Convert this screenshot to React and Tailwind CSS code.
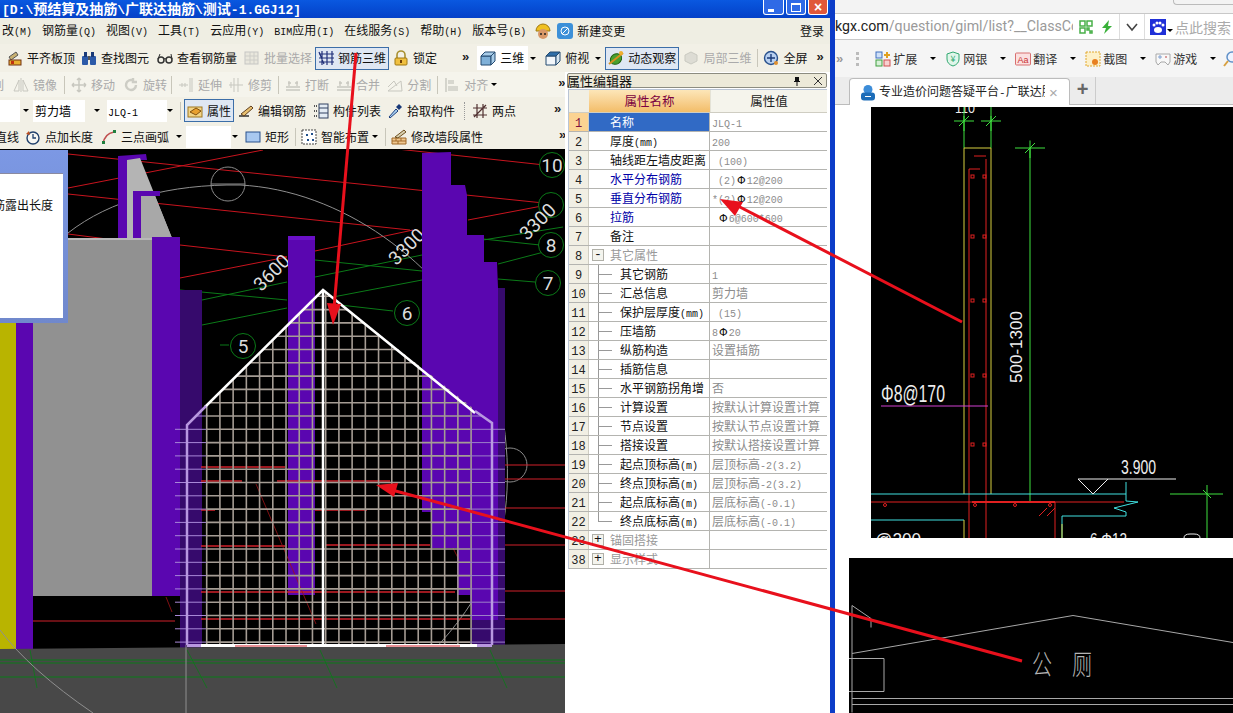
import { Fragment } from "react"
import clsx from "clsx"

const cjk = "font-['Noto_Sans_CJK_SC','Liberation_Sans',sans-serif]"

// SimSun style: latin runs are half the width of the cjk glyphs
const T = ({ s, latin = "text-[10px]" }) => (
  <>
    {s.split(/([\x00-\x7f]+)/).map((part, i) =>
      /^[\x00-\x7f]+$/.test(part)
        ? <span key={i} className={clsx("font-['Liberation_Mono',monospace]", latin)}>{part}</span>
        : <Fragment key={i}>{part}</Fragment>
    )}
  </>
)

const Ico = ({ name, className }) => {
  const shapes = {
    align: <><path d="M2 7 9 2l2 3-7 5z" fill="#c8b070" stroke="#555" /><rect x="2" y="10" width="12" height="5" fill="#e8b030" stroke="#703010" /><rect x="4" y="11" width="3" height="3" fill="#c03010" /></>,
    binoculars: <><rect x="1" y="6" width="6" height="9" rx="1" fill="#2c5aa8" /><rect x="9" y="6" width="6" height="9" rx="1" fill="#2c5aa8" /><rect x="3" y="2" width="3" height="5" fill="#1a3a78" /><rect x="10" y="2" width="3" height="5" fill="#1a3a78" /><rect x="7" y="6" width="2" height="4" fill="#555" /></>,
    glasses: <><circle cx="4" cy="10" r="3" fill="none" stroke="#333" strokeWidth="1.5" /><circle cx="12" cy="10" r="3" fill="none" stroke="#333" strokeWidth="1.5" /><path d="M7 9q1-1 2 0M1 9l2-5M15 9l-1-5" fill="none" stroke="#333" /></>,
    batch: <><rect x="1" y="2" width="13" height="12" fill="#e8e6dc" stroke="#bbb" /><path d="M1 6h13M1 10h13M6 2v12M10 2v12" stroke="#c4c4c0" /></>,
    rebar: <path d="M1 4h15M1 8h15M1 12h15M4 1v14M9 1v14M14 1v14M1 2l5 12" fill="none" stroke="#20307a" strokeWidth="1.2" />,
    lock: <><path d="M4 8V5a4 4 0 0 1 8 0v3" fill="none" stroke="#a89030" strokeWidth="1.6" /><rect x="2" y="8" width="12" height="7" rx="1" fill="#f0c040" stroke="#a07810" /><rect x="7" y="10" width="2" height="3" fill="#704008" /></>,
    cube: <><path d="M1 6h10v9H1z" fill="#7fb0d8" stroke="#244a70" /><path d="M1 6l4-4h10l-4 4zM11 6l4-4v9l-4 4z" fill="#a8cce8" stroke="#244a70" /></>,
    cubeTop: <><path d="M1 6h10v9H1z" fill="#f2f6fa" stroke="#244a70" /><path d="M1 6l4-4h10l-4 4z" fill="#2f6ea8" stroke="#244a70" /><path d="M11 6l4-4v9l-4 4z" fill="#d8e6f0" stroke="#244a70" /></>,
    orbit: <><ellipse cx="8" cy="9" rx="6" ry="5" transform="rotate(-35 8 9)" fill="#48a030" stroke="#206010" /><path d="M1 14 15 3" stroke="#d89020" strokeWidth="2" /><circle cx="13" cy="3" r="2" fill="#f0b030" /></>,
    local: <path d="M8 2l6 3v6l-6 3-6-3V5z" fill="#d8d8d0" stroke="#c0c0b8" />,
    zoom: <><circle cx="8" cy="8" r="6.5" fill="#b8d0f0" stroke="#28508c" strokeWidth="1.4" /><path d="M8 4v8M4 8h8" stroke="#183a78" strokeWidth="1.4" /><circle cx="13" cy="13" r="2" fill="#e09030" /></>,
    mirror: <><path d="M1 14 6 3v11zM15 14 10 3v11z" fill="none" stroke="#bdbdb5" /><path d="M8 1v14" stroke="#bdbdb5" /></>,
    move: <path d="M8 1v14M1 8h14M8 1 6 3M8 1l2 2M8 15l-2-2M8 15l2-2M1 8l2-2M1 8l2 2M15 8l-2-2M15 8l-2 2" fill="none" stroke="#bdbdb5" strokeWidth="1.4" />,
    rotate: <path d="M13 8a5 5 0 1 1-3-4.6M10 1v4h4" fill="none" stroke="#c4c4bc" strokeWidth="2.4" />,
    extend: <path d="M1 8h9M4 6v4M7 6v4M12 1v14M14 1v14" fill="none" stroke="#bdbdb5" />,
    trim: <path d="M1 8h14M6 1v14M10 1v14M3 5v6" fill="none" stroke="#bdbdb5" />,
    brk: <path d="M1 10h14M1 13h14M4 4v5M12 4v5M3 6h3M10 6h3" fill="none" stroke="#bdbdb5" strokeWidth="1.3" />,
    split: <path d="M1 14h14L14 4zM1 10l6-6 3 5" fill="none" stroke="#bdbdb5" />,
    alignL: <><path d="M2 1v14" stroke="#bdbdb5" strokeWidth="1.4" /><rect x="4" y="3" width="6" height="4" fill="#d0d0c8" /><rect x="4" y="9" width="10" height="5" fill="#d0d0c8" /></>,
    props: <><rect x="1" y="4" width="14" height="10" fill="#f2d488" stroke="#a07820" /><path d="M3 9l6-4 5 3-5 4z" fill="#e8a030" stroke="#805010" /></>,
    pencil: <><path d="M1 13h10" stroke="#222" strokeWidth="1.4" /><path d="M3 11 13 3l2 2-9 8z" fill="#e8c070" stroke="#604020" /></>,
    list: <><path d="M1 3h3M1 8h3M1 13h3" stroke="#555" strokeWidth="2" strokeDasharray="1 1" /><rect x="6" y="1" width="9" height="14" fill="#e4ecf4" stroke="#304060" /><path d="M6 5h9M6 10h9" stroke="#304060" /></>,
    dropper: <><path d="M2 14l7-8 2 2-8 7z" fill="#a8d0f0" stroke="#204080" /><path d="M9 4l3-3 3 3-3 3z" fill="#183878" /></>,
    cross: <path d="M1 5h14M1 12h14M5 1v14M11 1v14M2 14 14 2" fill="none" stroke="#503030" strokeWidth="1.2" />,
    clock: <><circle cx="8" cy="9" r="6" fill="#f6f6f2" stroke="#20406c" strokeWidth="1.4" /><path d="M8 5v4h3" fill="none" stroke="#20406c" strokeWidth="1.3" /><path d="M1 5 4 2l1 4" fill="#c05020" /></>,
    arc: <><path d="M2 15C3 8 7 4 13 3" fill="none" stroke="#c05050" strokeWidth="1.6" /><rect x="1" y="12" width="3" height="3" fill="#208040" /><rect x="12" y="1" width="3" height="3" fill="#208040" /></>,
    rect: <rect x="1" y="3" width="14" height="10" fill="#a8c8f0" stroke="#28508c" />,
    smart: <><rect x="1" y="1" width="14" height="14" fill="#fff" stroke="#444" strokeDasharray="2 1" /><path d="M5 5h2v2H5zM10 4h2v2h-2zM6 10h2v2H6zM11 10h2v2h-2z" fill="#20508c" /></>,
    wall: <><path d="M1 15V9h14v6zM1 12h14M5 9v3M10 9v3M7 12v3" fill="#f0c890" stroke="#a06828" /><path d="M4 8 13 1l2 2-8 6z" fill="#d8d0b0" stroke="#705020" /></>,
  }
  return <svg viewBox="0 0 16 16" className={clsx("w-4 h-4 shrink-0", className)}>{shapes[name]}</svg>
}

const Caret = ({ className }) => (
  <div className={clsx("w-0 h-0 shrink-0 border-x-[3px] border-x-transparent border-t-[3px] border-t-black", className)} />
)
const More = ({ className }) => (
  <span className={clsx("shrink-0 font-['Liberation_Sans'] font-bold text-[13px] leading-none text-[#222]", className)}>»</span>
)
const Sep = ({ className }) => <div className={clsx("w-px h-[18px] bg-[#c8c6ba] shrink-0", className)} />

const Tool = ({ icon, label, gray, active, className }) => (
  <div className={clsx(
    "flex items-center shrink-0 gap-1",
    active && "h-[23px] px-[2px] border border-[#3c6ea8] bg-[#dfe7f3]",
    gray ? "text-[#aaa] " : "text-[#111]",
    className
  )}>
    <Ico name={icon} className={gray ? "opacity-80" : ""} />
    <span className="text-xs leading-none whitespace-nowrap">{label}</span>
  </div>
)

const Row = ({ className, children }) => (
  <div className={clsx("flex items-center shrink-0 bg-[#f2f0e6] overflow-hidden", className)}>{children}</div>
)

const rows = [
  { n: "1", name: "名称", val: "JLQ-1", sel: true },
  { n: "2", name: "厚度(mm)", val: "200" },
  { n: "3", name: "轴线距左墙皮距离", val: " (100)" },
  { n: "4", name: "水平分布钢筋", val: " (2)", bar: "12@200", link: true },
  { n: "5", name: "垂直分布钢筋", val: "*(2)", bar: "12@200", link: true },
  { n: "6", name: "拉筋", val: " ", bar: "6@600*600", link: true },
  { n: "7", name: "备注", val: "" },
  { n: "8", name: "其它属性", val: "", group: "-" },
  { n: "9", name: "其它钢筋", val: "1", sub: true },
  { n: "10", name: "汇总信息", val: "剪力墙", sub: true },
  { n: "11", name: "保护层厚度(mm)", val: " (15)", sub: true },
  { n: "12", name: "压墙筋", val: "8", bar: "20", sub: true },
  { n: "13", name: "纵筋构造", val: "设置插筋", sub: true },
  { n: "14", name: "插筋信息", val: "", sub: true },
  { n: "15", name: "水平钢筋拐角增", val: "否", sub: true },
  { n: "16", name: "计算设置", val: "按默认计算设置计算", sub: true },
  { n: "17", name: "节点设置", val: "按默认节点设置计算", sub: true },
  { n: "18", name: "搭接设置", val: "按默认搭接设置计算", sub: true },
  { n: "19", name: "起点顶标高(m)", val: "层顶标高-2(3.2)", sub: true },
  { n: "20", name: "终点顶标高(m)", val: "层顶标高-2(3.2)", sub: true },
  { n: "21", name: "起点底标高(m)", val: "层底标高(-0.1)", sub: true },
  { n: "22", name: "终点底标高(m)", val: "层底标高(-0.1)", sub: true, last: true },
  { n: "23", name: "锚固搭接", val: "", group: "+" },
  { n: "38", name: "显示样式", val: "", group: "+" },
]

const PropRow = ({ r }) => (
  <div className="flex h-[19px] shrink-0 border-b border-[#b4b4b0] text-xs leading-[18px]">
    <div className={clsx("w-[20px] shrink-0 text-center border-r border-[#cfcdc2]", r.sel ? "bg-[#fbd392] text-[#7a1040]" : "bg-[#f1efe4] text-[#222]")}>
      <T s={r.n} latin="text-[12px]" />
    </div>
    <div className={clsx("relative w-[121px] shrink-0 border-r border-[#b4b4b0] whitespace-nowrap overflow-hidden", r.sel ? "bg-[#316ac5] text-white" : r.link ? "text-[#0000a8]" : r.group ? "text-[#999]" : "text-[#111]")}>
      {r.group && (
        <div className="absolute left-[3px] top-[3px] w-[12px] h-[12px] border border-[#b0b0a8] bg-[#f4f4ee] text-[#111] text-center text-[13px] leading-[9px] font-['Liberation_Mono']">{r.group}</div>
      )}
      {r.sub && <div className={clsx("absolute left-[9px] top-0 w-px border-l border-[#999]", r.last ? "h-[10px]" : "h-[19px]")} />}
      {r.sub && <div className="absolute left-[10px] top-[9px] w-[13px] border-t border-[#999]" />}
      <div className={r.sub ? "pl-[31px]" : "pl-[21px]"}><T s={r.name} /></div>
    </div>
    <div className="flex-1 pl-[2px] text-[#8c8c8c] whitespace-pre overflow-hidden">
      <T s={r.val} />
      {r.bar && <span className="text-[#111] font-['DejaVu_Sans'] text-[11px] mx-[1px]">Φ</span>}
      {r.bar && <T s={r.bar} />}
    </div>
  </div>
)

const PropPanel = () => (
  <div className="w-[265px] shrink-0 bg-white pl-[2px] pr-[3px] flex flex-col">
    <div className="h-[15px] mt-[1px] flex items-center bg-[#ece9d8] border border-[#8c8c80] rounded-[2px] text-[13px] leading-none text-[#111]">
      <span className="-ml-px">属性编辑器</span>
      <svg viewBox="0 0 10 10" className="w-[10px] h-[10px] ml-auto mr-[11px]"><path d="M3 1h4v4h1v1H5.5v4h-1V6H2V5h1z" fill="#111" /></svg>
      <svg viewBox="0 0 10 10" className="w-[10px] h-[10px] mr-[3px]"><path d="M1 1l8 8M9 1l-8 8" stroke="#333" /></svg>
    </div>
    <div className="mt-[1px] ml-[1px] border-t border-l border-[#b9c4d4] flex flex-col">
      <div className="flex h-[23px] shrink-0 text-[12.5px] leading-[22px] text-center border-b border-[#cfcdc2]">
        <div className="w-[20px] shrink-0 bg-[#f1efe4]" />
        <div className="w-[121px] shrink-0 bg-gradient-to-b from-[#fce6b8] to-[#f3bd68] text-[#7a0040]">属性名称</div>
        <div className="flex-1 bg-[#f5f4ec] text-[#222] border-l border-[#e4e2d6]">属性值</div>
      </div>
      {rows.map(r => <PropRow key={r.n} r={r} />)}
    </div>
  </div>
)

const mx = Array.from({ length: 21 }, (_, i) => 206.7 + i * 13.22)
const my = Array.from({ length: 27 }, (_, i) => 296.3 + i * 13.3)
const reds = [[68, 154, 563, 205], [68, 188, 263, 150], [68, 194, 410, 230], [68, 234, 115, 240], [180, 245, 287, 257], [180, 278, 287, 257], [315, 251, 413, 230], [468, 220, 563, 202], [397, 149, 563, 167], [15, 150, 37, 151]]
const greens = [[180, 290, 287, 300], [202, 300, 287, 282], [202, 325, 287, 308], [315, 260, 422, 271], [315, 277, 422, 255], [333, 297, 422, 280], [340, 305, 393, 311], [483, 239, 540, 245], [483, 240, 563, 227], [498, 264, 563, 247], [498, 279, 535, 282], [220, 345, 229, 345]]
const inMeshReds = [[201, 285, 467], [277, 390, 481], [201, 242, 481], [201, 215, 510], [315, 367, 510], [201, 285, 546], [325, 430, 545], [201, 455, 592], [201, 470, 619], [505, 565, 465], [505, 565, 479], [505, 565, 508], [505, 565, 545], [505, 565, 591], [505, 565, 619], [33, 175, 621]]
const axes = [["10", 552, 165], ["", 551, 205], ["8", 551, 245], ["7", 548, 283], ["6", 407, 313], ["5", 243, 346]]
const dims = [["3600", 272, 273], ["3300", 407, 247], ["3300", 538, 222]]

const Model = () => (
  <svg viewBox="0 150 565 563" className="block w-full h-full">
    <defs>
      <clipPath id="house"><path d="M323 290 492 423h13v222H175V425h12z" /></clipPath>
    </defs>
    {reds.map((l, i) => <line key={i} x1={l[0]} y1={l[1]} x2={l[2]} y2={l[3]} stroke="#c8141e" />)}
    {greens.map((l, i) => <line key={i} x1={l[0]} y1={l[1]} x2={l[2]} y2={l[3]} stroke="#0b7a18" />)}
    <circle cx="228" cy="184" r="17" fill="none" stroke="#8a8a8a" />
    <line x1="211" y1="184" x2="245" y2="184" stroke="#8a8a8a" />
    <circle cx="510" cy="465" r="17" fill="none" stroke="#8a8a8a" />
    <path d="M68 233C110 200 170 184 240 185 340 190 440 260 490 360 510 430 512 490 500 540 480 610 430 660 363 713" fill="none" stroke="#8f8f8f" />
    {axes.map(a => (
      <g key={a[1] + "-" + a[2]}>
        <circle cx={a[1]} cy={a[2]} r="12.5" fill="#000" stroke="#0b7a18" />
        <text x={a[1]} y={a[2] + 7} textAnchor="middle" fill="#ddd" fontSize="19" fontFamily="Roboto, sans-serif">{a[0]}</text>
      </g>
    ))}
    {dims.map(d => (
      <text key={d[1]} x={d[1]} y={d[2] + 6} transform={`rotate(-45 ${d[1]} ${d[2]})`} textAnchor="middle" fill="#ddd" fontSize="19" fontFamily="Roboto, sans-serif">{d[0]}</text>
    ))}

    {/* far wall */}
    <path d="M118 156l28-2 1 6h-20v78h-9z" fill="#5a06b0" />
    <path d="M127 160l13-2 32 80h-45z" fill="#b4b4b4" />
    <path d="M133 191h27v5h-19v42h-8z" fill="#5a06b0" />
    <path d="M141 196h14l17 42h-31z" fill="#a8a8a8" />
    <rect x="180" y="290" width="22" height="358" fill="#360a6c" />
    <rect x="33" y="238" width="119" height="358" fill="#919191" />
    <rect x="33" y="238" width="119" height="2" fill="#b8b8b8" />
    <rect x="152" y="237" width="28" height="359" fill="#5a06b0" />
    <rect x="0" y="323" width="16" height="327" fill="#b9b400" />
    <rect x="16" y="323" width="17" height="327" fill="#5a06b0" />
    <rect x="288" y="236" width="27" height="359" fill="#5a06b0" />
    <rect x="288" y="236" width="27" height="4" fill="#6a10c8" />
    <rect x="498" y="288" width="7" height="358" fill="#360a6c" />
    <path d="M422 153l29-1v33h14l2 10v40h17v27h13l1 26v332h-26l-2-25h-13v-47h-25v-36h-10z" fill="#5a06b0" />
    <rect x="472" y="620" width="33" height="26" fill="#360a6c" />
    <path d="M0 649 565 644v69H0z" fill="#484848" />

    {inMeshReds.map((l, i) => <line key={i} x1={l[0]} y1={l[2]} x2={l[1]} y2={l[2]} stroke="#d0202a" strokeWidth={i < 9 ? 1.5 : 1} />)}
    <path d="M166 597l6 15M256 484l60 140M453 548l6 12" fill="none" stroke="#a01418" strokeWidth="0.8" />

    {/* ground axes */}
    <path d="M0 660H565M0 663H565M0 677H565" stroke="#0a7a18" />
    <path d="M30 650l7 38M187 650l20 38M320 650l17 38M490 650l17 38" stroke="#0a7a18" strokeWidth="0.8" />
    <path d="M186 645v68M0 630Q30 670 93 713" fill="none" stroke="#8f8f8f" />

    {/* rebar mesh */}
    <g clipPath="url(#house)">
      {mx.map(x => <line key={x} x1={x} y1="290" x2={x} y2="645" stroke="#a59c94" strokeWidth="1.6" />)}
      {my.map(y => <line key={y} x1="206" y1={y} x2="470" y2={y} stroke="#a59c94" strokeWidth="1.6" />)}
      {my.map(y => <line key={y} x1="175" y1={y} x2="206" y2={y} stroke="#a888d8" />)}
      {my.map(y => <line key={y} x1="470" y1={y} x2="505" y2={y} stroke="#9c80c8" />)}
    </g>
    <path d="M205 407 323 290 475 413" fill="none" stroke="#fff" strokeWidth="2.5" />
    <path d="M187 645V425l19-19M475 411l17 12V645" fill="none" stroke="#b898e0" strokeWidth="2.5" />
    <path d="M323 290V645" stroke="#fff" strokeWidth="2.5" />
    <rect x="201" y="644" width="276" height="3" fill="#fff" />
    <rect x="187" y="644" width="14" height="3" fill="#b898e0" />
    <rect x="477" y="644" width="15" height="3" fill="#b898e0" />
    <path d="M235 646h72M386 646h74" stroke="#d0202a" />
  </svg>
)

const Cross = ({ x, y, w = 24 }) => (
  <path d={`M${x - w} ${y}H${x + w}M${x} ${y - w / 2}V${y + 10}M${x - 5} ${y + 5}l10-10`} fill="none" stroke="#3fe03f" />
)

const CadSection = () => (
  <svg viewBox="871 108 362 431" className="block w-full h-full">
    <text x="955" y="114" fill="#eee" fontSize="15" fontFamily="Liberation Sans, sans-serif" textLength="20" lengthAdjust="spacingAndGlyphs">110</text>
    <path d="M964 108V149M991 108V149" stroke="#3fe03f" />
    <Cross x={964} y={122} w={10} />
    <Cross x={991} y={122} w={10} />
    <Cross x={1030} y={149} w={15} />
    <path d="M1030 149V503" stroke="#3fe03f" />
    <path d="M964 149H991M964 149V495M991 149V495" fill="none" stroke="#d8d040" />
    <path d="M969 539V170H980M986 539V160M974 157H986" fill="none" stroke="#e02020" />
    {[176, 236, 300, 375, 444].map(y => (
      <g key={y} fill="none" stroke="#e02020">
        <rect x="971" y={y} width="3" height="3" />
        <rect x="983" y={y} width="3" height="3" />
      </g>
    ))}
    <text transform="translate(1022 384) rotate(-90)" fill="#eee" fontSize="17" fontFamily="Liberation Sans, sans-serif" textLength="72" lengthAdjust="spacingAndGlyphs">500-1300</text>
    <path d="M881 407H988" stroke="#d040d0" />
    <text x="881" y="403" fill="#eee" fontSize="24" fontFamily="Liberation Sans, sans-serif" textLength="64" lengthAdjust="spacingAndGlyphs">Φ8@170</text>
    <path d="M871 495H1126M871 521H964M1062 539V517H1126M1126 483V502L1138 503 1114 509 1126 513V517" fill="none" stroke="#40e0e0" />
    <path d="M871 503H1124" stroke="#e02020" />
    <path d="M972 503H1055" stroke="#e02020" strokeWidth="2" />
    <path d="M1055 503V539M1047 509l-8 8M1055 509l-8 8" stroke="#e02020" />
    <path d="M964 521V539M1062 525V539" stroke="#d8d040" />
    {[885, 975, 1015, 1050].map(x => <circle key={x} cx={x} cy={506} r="1.5" fill="none" stroke="#e02020" />)}
    <text x="1121" y="475" fill="#eee" fontSize="21" fontFamily="Liberation Sans, sans-serif" textLength="35" lengthAdjust="spacingAndGlyphs">3.900</text>
    <path d="M1078 480H1176M1078 480l15 15 15-15" fill="none" stroke="#eee" />
    <path d="M1170 495H1223M1207 486V539M1203 491l8 8" fill="none" stroke="#3fe03f" />
    <text x="1090" y="546" fill="#eee" fontSize="17" fontFamily="Liberation Sans, sans-serif" textLength="37" lengthAdjust="spacingAndGlyphs">6 Φ12</text>
    <text x="875" y="547" fill="#eee" fontSize="19" fontFamily="Liberation Sans, sans-serif" textLength="46" lengthAdjust="spacingAndGlyphs">@200</text>
    <path d="M1184 539q0-4 6-4h4q6 0 6 4" fill="none" stroke="#eee" />
  </svg>
)

const CadPlan = () => (
  <svg viewBox="849 559 384 154" className="block w-full h-full">
    <path d="M852 654 1073 616 1233 643M852 606V713M852 606l19 13v9M849 659H884V692H849M852 699H1233M852 705H1233" fill="none" stroke="#a8a8a8" />
    <text x="1032" y="675" fill="#b4b4b4" fontSize="28" fontWeight="200" fontFamily="Noto Sans CJK SC, sans-serif" textLength="20" lengthAdjust="spacingAndGlyphs">公</text>
    <text x="1072" y="675" fill="#b4b4b4" fontSize="28" fontWeight="200" fontFamily="Noto Sans CJK SC, sans-serif" textLength="20" lengthAdjust="spacingAndGlyphs">厕</text>
  </svg>
)

const bookmarks = [
  { label: "扩展", ml: "ml-[16px]", icon: <svg viewBox="0 0 16 16" className="w-4 h-4"><rect x="1" y="1" width="6" height="6" fill="#cfe0f8" stroke="#4070c0" /><rect x="1" y="9" width="6" height="6" fill="#d8f0d8" stroke="#40a040" /><rect x="9" y="9" width="6" height="6" fill="#f8d0d0" stroke="#d05050" /><path d="M12 1v6M9 4h6" stroke="#e0a020" strokeWidth="2" /></svg> },
  { label: "网银", ml: "ml-[9px]", icon: <svg viewBox="0 0 16 16" className="w-4 h-4"><path d="M8 1l6 2v5q0 5-6 7-6-2-6-7V3z" fill="#e0f6ea" stroke="#30a870" /><text x="8" y="11" textAnchor="middle" fontSize="9" fill="#30a870">¥</text></svg> },
  { label: "翻译", ml: "ml-[9px]", icon: <svg viewBox="0 0 16 16" className="w-4 h-4"><rect x="0.5" y="2" width="15" height="12" rx="1" fill="#fbe0e0" stroke="#d87070" /><text x="8" y="11.5" textAnchor="middle" fontSize="9" fill="#c83030" fontFamily="Liberation Sans">Aa</text></svg> },
  { label: "截图", ml: "ml-[9px]", icon: <svg viewBox="0 0 16 16" className="w-4 h-4"><rect x="1" y="1" width="14" height="14" fill="#fdf0c8" stroke="#e0a830" strokeDasharray="2 1" /><circle cx="10" cy="11" r="3" fill="#e88020" /></svg> },
  { label: "游戏", ml: "ml-[9px]", icon: <svg viewBox="0 0 16 16" className="w-4 h-4"><path d="M1 3h14v8l-2 3-3-3H6l-3 3-2-3z" fill="#f8f8f8" stroke="#a8a8a8" /><circle cx="11" cy="6" r="1" fill="#d08080" /><path d="M3 6h4M5 4v4" stroke="#80a0d0" /></svg> },
]

const Browser = () => (
  <div className="flex-1 min-w-0 h-full flex flex-col bg-white overflow-hidden">
    <div className="h-[14px] shrink-0 bg-[#f3f3f3] border-b border-[#c8c8c8] flex justify-end">
      <div className="w-[60px] h-[5px] border-l border-b border-[#bbb] rounded-bl-sm" />
    </div>
    <div className="h-[26px] shrink-0 bg-white border-b border-[#c8c8c8] flex items-center">
      <div className="w-[238px] shrink-0 overflow-hidden whitespace-nowrap font-['Roboto','Liberation_Sans',sans-serif] text-[14.2px] leading-none">
        <span className="text-[#222]">kgx.com</span><span className="text-[#9a9a9a]">/question/giml/list?__ClassCc</span>
      </div>
      <svg viewBox="0 0 14 14" className="w-[14px] h-[14px] shrink-0 ml-[6px]"><path d="M1 1h5v5H1zM8 1h5v5H8zM1 8h5v5H1zM8 8h2v2H8zM11 11h2v2h-2z" fill="none" stroke="#48b048" strokeWidth="1.5" /></svg>
      <svg viewBox="0 0 14 14" className="w-[14px] h-[14px] shrink-0 ml-[7px]"><path d="M9 0 2 8h4l-2 6 8-8H8z" fill="#38b038" /></svg>
      <div className="w-px h-[25px] bg-[#ddd] ml-[5px] shrink-0" />
      <svg viewBox="0 0 12 12" className="w-[12px] h-[12px] shrink-0 ml-[6px]"><path d="M1 3l5 6 5-6" fill="none" stroke="#444" strokeWidth="1.6" /></svg>
      <div className="w-px h-[25px] bg-[#ddd] ml-[6px] shrink-0" />
      <svg viewBox="0 0 16 16" className="w-4 h-4 shrink-0 ml-[5px]"><rect width="16" height="16" fill="#2030d8" /><ellipse cx="8" cy="11" rx="4" ry="3" fill="#fff" /><circle cx="4" cy="6" r="1.5" fill="#fff" /><circle cx="7" cy="4" r="1.5" fill="#fff" /><circle cx="10" cy="4" r="1.5" fill="#fff" /><circle cx="13" cy="6" r="1.5" fill="#fff" /></svg>
      <Caret className="ml-[1px] mt-[8px]" />
      <span className="ml-[2px] text-[14px] leading-none text-[#aaa] whitespace-nowrap">点此搜索</span>
    </div>
    <div className="h-[37px] shrink-0 bg-[#f5f5f5] flex items-center">
      <More className="ml-[1px] text-[#999]" />
      <div className="ml-[13px] h-[14px] w-[3px] border-l-[3px] border-dotted border-[#bbb]" />
      {bookmarks.map(b => (
        <div key={b.label} className={clsx("flex items-center shrink-0", b.ml)}>
          {b.icon}
          <span className="ml-[2px] text-xs text-[#333] leading-none">{b.label}</span>
          <Caret className="ml-[13px] border-t-[#888]" />
        </div>
      ))}
      <svg viewBox="0 0 16 16" className="w-4 h-4 ml-[7px] shrink-0"><circle cx="9" cy="6" r="5" fill="#eef4ff" stroke="#6090c8" strokeWidth="1.5" /><path d="M5 10l-4 5" stroke="#d8a040" strokeWidth="2" /></svg>
    </div>
    <div className="h-[28px] shrink-0 bg-[#ececec] flex items-end border-b border-[#bcbcbc]">
      <div className="ml-[14px] w-[221px] h-[27px] -mb-px bg-white border border-b-0 border-[#bcbcbc] rounded-t-[4px] flex items-center pl-[10px] shrink-0">
        <svg viewBox="0 0 16 16" className="w-4 h-[17px] shrink-0"><circle cx="8" cy="5" r="4.5" fill="#3c8cd8" /><rect x="1" y="8" width="14" height="8" rx="3" fill="#1c6cb8" /><path d="M5 12h6" stroke="#fff" /></svg>
        <span className="ml-[3px] w-[166px] overflow-hidden whitespace-nowrap text-xs leading-none text-[#222]"><T s="专业造价问题答疑平台-广联达服" latin="text-[11px]" /></span>
        <span className="ml-[4px] text-[#aaa] text-[15px] leading-none font-['Liberation_Sans']">×</span>
      </div>
      <div className="w-[26px] h-[27px] border-r border-[#ccc] text-center text-[#666] text-[20px] leading-[24px] font-['Liberation_Sans'] font-bold shrink-0">+</div>
    </div>
    <div className="h-[2px] shrink-0" />
    <div className="h-[431px] shrink-0 ml-[36px] bg-black"><CadSection /></div>
    <div className="h-[20px] shrink-0" />
    <div className="flex-1 ml-[14px] bg-black min-h-0"><CadPlan /></div>
  </div>
)

export default function App() {
  return (
    <div className={clsx("relative flex w-[1233px] h-[713px] overflow-hidden bg-white", cjk)}>
      <div className="w-[830px] shrink-0 h-full flex flex-col">
        {/* title bar */}
        <div className="h-[18px] shrink-0 flex items-center bg-gradient-to-b from-[#0a58e0] to-[#0440c8]">
          <span className="ml-[2px] text-[14px] font-bold text-white whitespace-nowrap leading-none">
            <T s="[D:\预结算及抽筋\广联达抽筋\测试-1.GGJ12]" latin="text-[13px]" />
          </span>
          <div className="ml-auto flex items-start self-start gap-[2px] mr-[2px]">
            <div className="w-[21px] h-[15px] rounded-b-[3px] border border-t-0 border-white bg-[#2f6ae6] flex items-end justify-center pb-[2px] pr-[6px]"><div className="w-[6px] h-[3px] bg-white" /></div>
            <div className="w-[20px] h-[15px] rounded-b-[3px] border border-t-0 border-white bg-[#2f6ae6] flex items-center justify-center"><div className="w-[10px] h-[9px] border border-t-2 border-white" /></div>
            <div className="w-[20px] h-[15px] rounded-b-[3px] border border-t-0 border-white bg-[#e0583a] flex items-center justify-center text-white text-[14px] font-bold leading-none font-['Liberation_Sans']">×</div>
          </div>
        </div>
        {/* menu */}
        <div className="h-[26px] shrink-0 flex items-center gap-[10px] bg-[#efeee3] pl-[2px] text-xs text-[#111] whitespace-nowrap">
          {["改(M)", "钢筋量(Q)", "视图(V)", "工具(T)", "云应用(Y)", "BIM应用(I)", "在线服务(S)", "帮助(H)", "版本号(B)"].map(m => <span key={m}><T s={m} /></span>)}
          <svg viewBox="0 0 18 18" className="w-[18px] h-[18px] -ml-[2px]"><path d="M2 9a7 7 0 0 1 14 0z" fill="#f0c020" stroke="#a07810" /><circle cx="9" cy="12" r="5" fill="#d89868" /><circle cx="7" cy="12" r="1" fill="#222" /><circle cx="11" cy="12" r="1" fill="#222" /></svg>
          <svg viewBox="0 0 16 16" className="w-4 h-4 -ml-[5px]"><rect width="16" height="16" rx="3" fill="#3c90d8" /><circle cx="8" cy="8" r="4" fill="none" stroke="#fff" /><path d="M5 11l6-6" stroke="#fff" /></svg>
          <span className="-ml-[6px]">新建变更</span>
          <span className="ml-auto mr-[6px]">登录</span>
        </div>
        {/* main toolbar */}
        <Row className="h-[28px]">
          <Tool icon="align" label="平齐板顶" className="ml-[7px]" />
          <Tool icon="binoculars" label="查找图元" className="ml-[6px]" />
          <Tool icon="glasses" label="查看钢筋量" className="ml-[8px]" />
          <Tool icon="batch" label="批量选择" gray className="ml-[7px]" />
          <Tool icon="rebar" label="钢筋三维" active className="ml-[3px]" />
          <Tool icon="lock" label="锁定" className="ml-[4px]" />
          <More className="ml-[25px] -mt-[4px]" />
          <div className="ml-[8px] h-[24px] pl-[3px] pr-[4px] bg-white flex items-center shrink-0"><Tool icon="cube" label="三维" /></div>
          <Caret className="ml-[2px]" />
          <Tool icon="cubeTop" label="俯视" className="ml-[9px]" />
          <Caret className="ml-[6px]" />
          <Tool icon="orbit" label="动态观察" active className="ml-[4px]" />
          <Tool icon="local" label="局部三维" gray className="ml-[4px]" />
          <Sep className="ml-[6px]" />
          <Tool icon="zoom" label="全屏" className="ml-[5px]" />
          <More className="ml-[9px] -mt-[4px]" />
        </Row>
        <div className="flex-1 min-h-0 flex">
          <div className="w-[565px] shrink-0 flex flex-col relative">
            <Row className="h-[25px] bg-[#f5f4ec]">
              <span className="-ml-[8px] text-xs text-[#aaa]">列</span>
              <Tool icon="mirror" label="镜像" gray className="ml-[9px]" />
              <Sep className="ml-[7px]" />
              <Tool icon="move" label="移动" gray className="ml-[6px]" />
              <Tool icon="rotate" label="旋转" gray className="ml-[8px]" />
              <Sep className="ml-[4px]" />
              <Tool icon="extend" label="延伸" gray className="ml-[6px]" />
              <Tool icon="trim" label="修剪" gray className="ml-[6px]" />
              <Sep className="ml-[6px]" />
              <Tool icon="brk" label="打断" gray className="ml-[6px]" />
              <Tool icon="brk" label="合并" gray className="ml-[7px]" />
              <Tool icon="split" label="分割" gray className="ml-[7px]" />
              <Sep className="ml-[6px]" />
              <Tool icon="alignL" label="对齐" gray className="ml-[6px]" />
              <Caret className="ml-[3px] border-t-[#aaa]" />
              <More className="ml-[61px] -mt-[4px]" />
            </Row>
            <Row className="h-[27px]">
              <div className="w-[20px] h-[22px] bg-white shrink-0" />
              <Caret className="ml-[3px]" />
              <div className="ml-[4px] w-[52px] h-[22px] pl-[2px] bg-white text-xs leading-[22px] shrink-0">剪力墙</div>
              <Caret className="ml-[9px]" />
              <div className="ml-[7px] w-[60px] h-[22px] pl-[1px] bg-white text-xs leading-[22px] shrink-0"><T s="JLQ-1" /></div>
              <Caret />
              <Sep className="ml-[7px]" />
              <Tool icon="props" label="属性" active className="ml-[3px]" />
              <Tool icon="pencil" label="编辑钢筋" className="ml-[4px]" />
              <Tool icon="list" label="构件列表" className="ml-[7px]" />
              <Tool icon="dropper" label="拾取构件" className="ml-[6px]" />
              <div className="ml-[9px] h-[18px] w-px border-l border-dotted border-[#999] shrink-0" />
              <Tool icon="cross" label="两点" className="ml-[7px]" />
              <More className="ml-[38px] -mt-[4px]" />
            </Row>
            <Row className="h-[26px] border-b border-black">
              <span className="-ml-[5px] text-xs text-[#111] whitespace-nowrap">直线</span>
              <Tool icon="clock" label="点加长度" className="ml-[6px]" />
              <Tool icon="arc" label="三点画弧" className="ml-[8px]" />
              <Caret className="ml-[7px]" />
              <div className="ml-[4px] w-[45px] h-[22px] bg-white shrink-0" />
              <Caret className="ml-[1px]" />
              <Tool icon="rect" label="矩形" className="ml-[7px]" />
              <Sep className="ml-[6px]" />
              <Tool icon="smart" label="智能布置" className="ml-[5px]" />
              <Caret className="ml-[3px]" />
              <Sep className="ml-[7px]" />
              <Tool icon="wall" label="修改墙段属性" className="ml-[5px]" />
              <More className="ml-[76px] -mt-[4px]" />
            </Row>
            <div className="flex-1 min-h-0 bg-black relative">
              <Model />
              {/* floating dialog cut off by the window edge */}
              <div className="absolute left-0 top-0 w-[68px] h-[173px] bg-gradient-to-b from-[#7c98e4] to-[#7088cc] pr-[5px] pb-[5px] pt-[23px]">
                <div className="h-full bg-white border-t border-[#8a8aa0] pt-[23px] text-xs text-[#111] whitespace-nowrap overflow-hidden">
                  <span className="-ml-[7px] block">筋露出长度</span>
                </div>
              </div>
            </div>
          </div>
          <PropPanel />
        </div>
      </div>
      <div className="w-[5px] shrink-0 h-full bg-[#0c3cc8]" />
      <Browser />
      {/* red annotation arrows drawn over the whole screenshot */}
      <svg viewBox="0 0 1233 713" className="absolute inset-0 w-full h-full pointer-events-none">
        <g stroke="#e8101c" strokeWidth="3" fill="#e8101c">
          <path d="M356 53 334 308" />
          <path d="M333 325 327 303 341 304z" stroke="none" />
          <path d="M962 322 736 205" />
          <path d="M720 199 743 202 735 216z" stroke="none" />
          <path d="M1022 661 392 490" />
          <path d="M376 485 398 483 394 497z" stroke="none" />
        </g>
      </svg>
    </div>
  )
}
